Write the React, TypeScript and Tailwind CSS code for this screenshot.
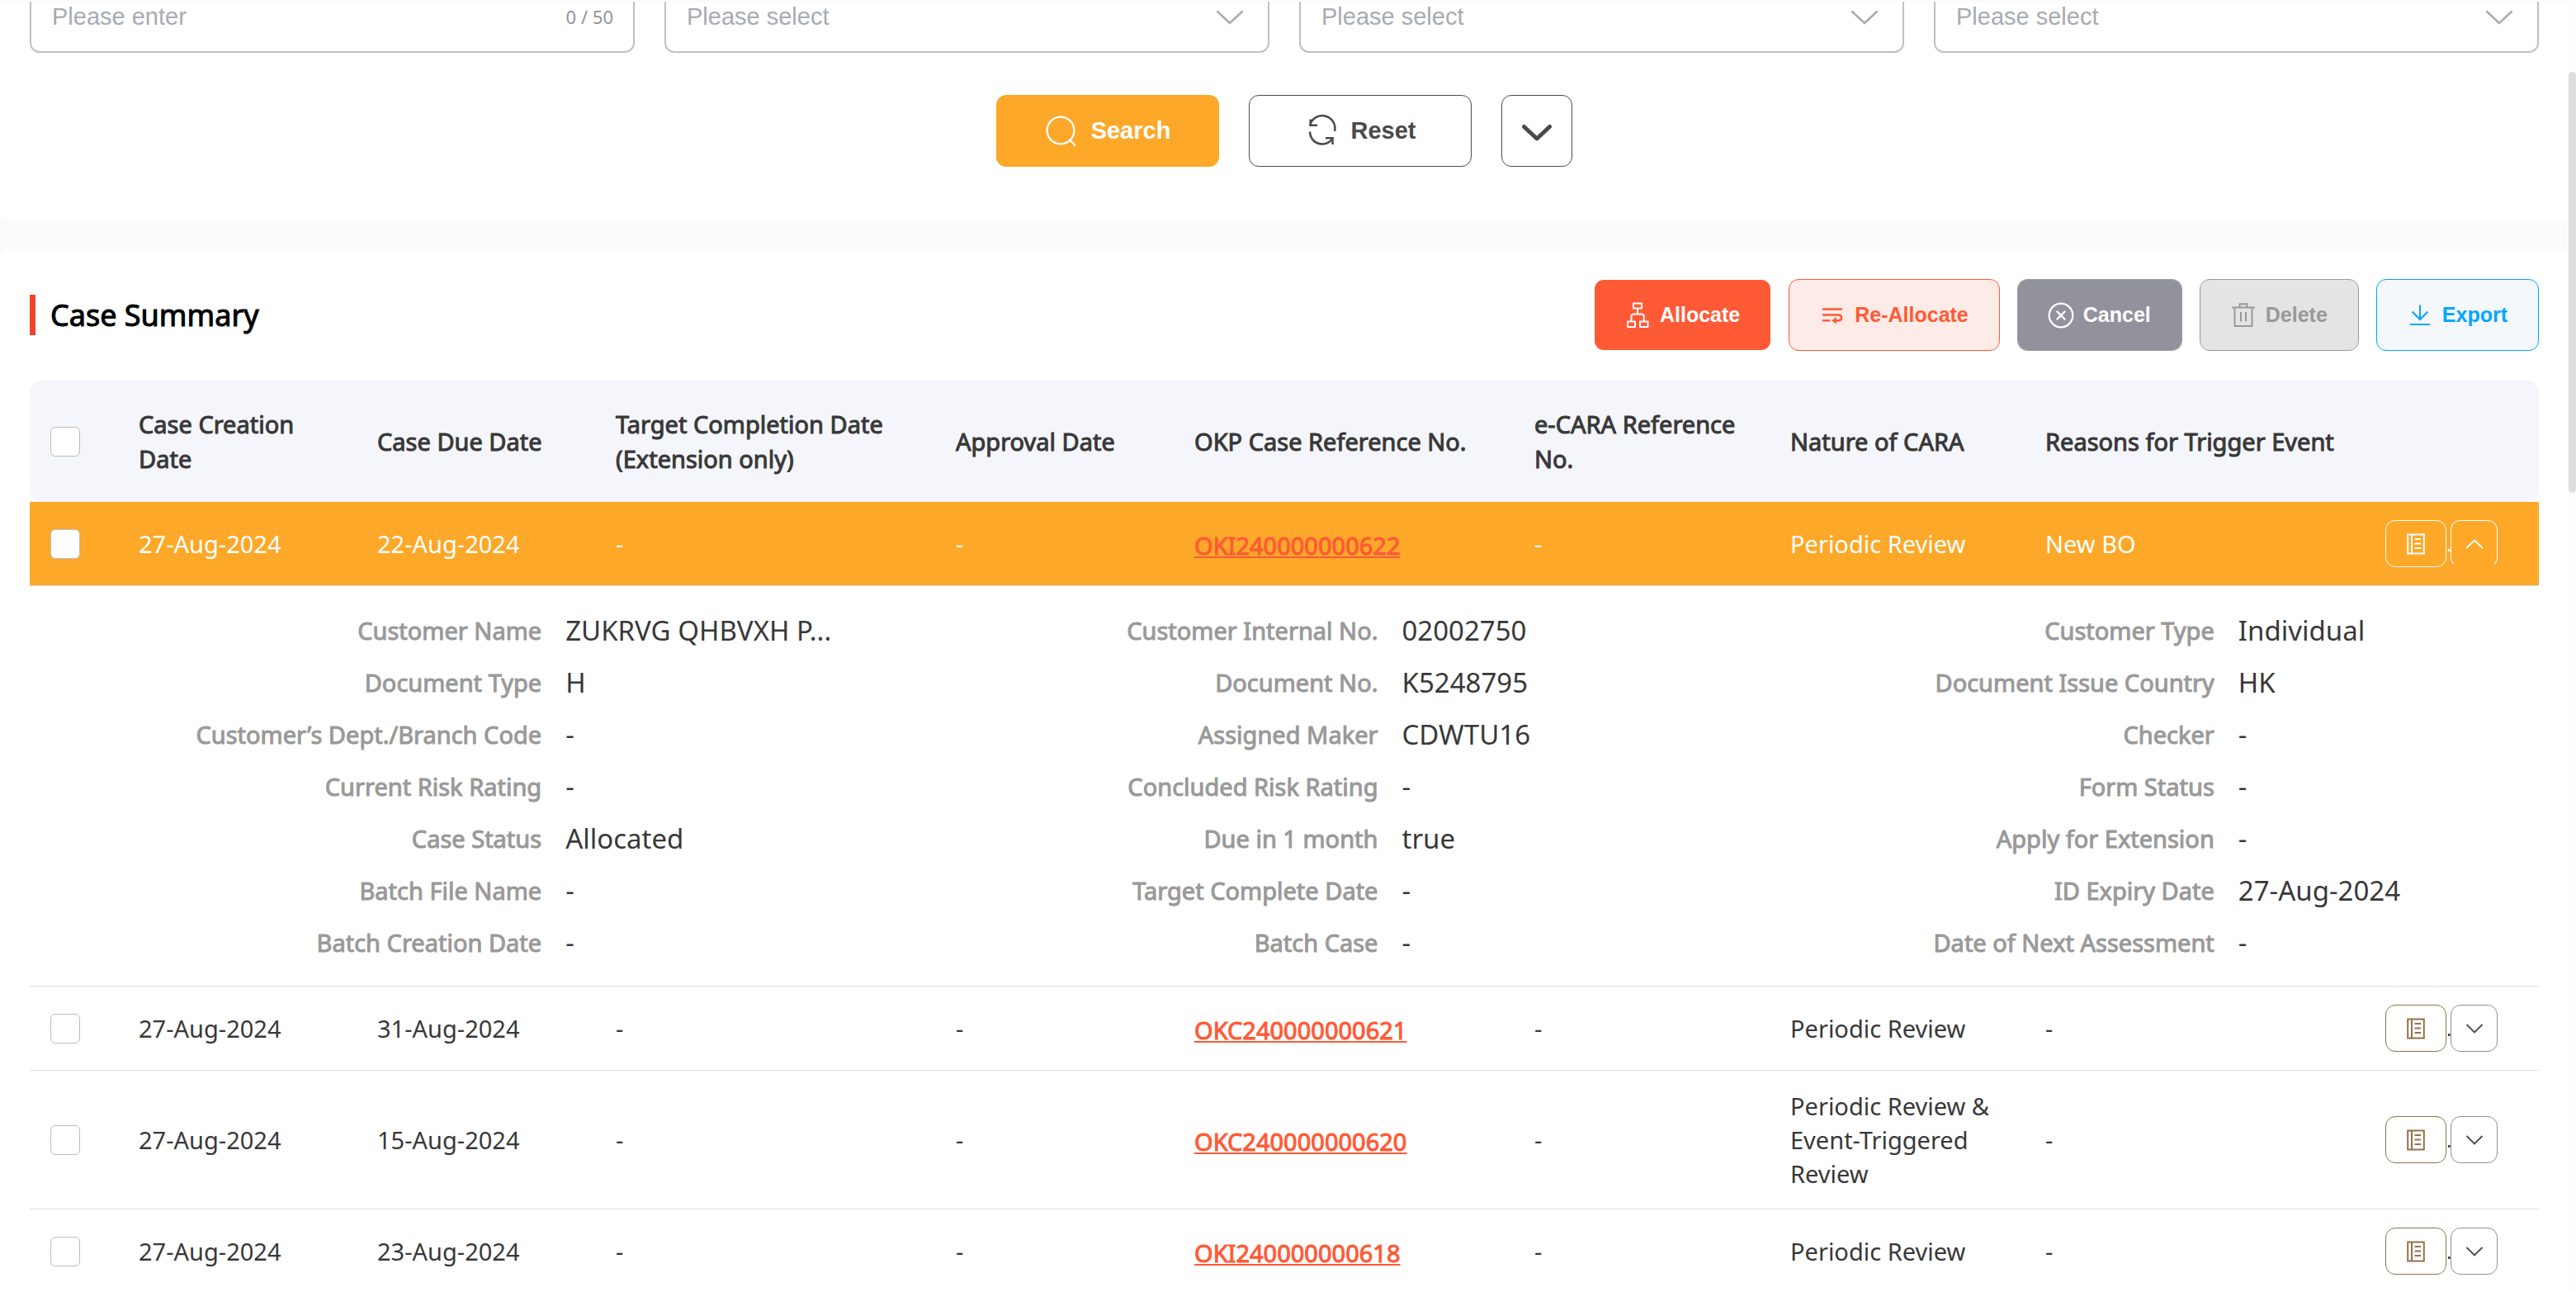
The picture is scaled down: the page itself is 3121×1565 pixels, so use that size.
import { Fragment, useState } from "react";
import type { ReactNode } from "react";

type CaseRow = {
  id: string;
  created: string;
  due: string;
  nature: string;
  reason: string;
};

const rows: CaseRow[] = [
  { id: "OKI240000000622", created: "27-Aug-2024", due: "22-Aug-2024", nature: "Periodic Review", reason: "New BO" },
  { id: "OKC240000000621", created: "27-Aug-2024", due: "31-Aug-2024", nature: "Periodic Review", reason: "-" },
  { id: "OKC240000000620", created: "27-Aug-2024", due: "15-Aug-2024", nature: "Periodic Review & Event-Triggered Review", reason: "-" },
  { id: "OKI240000000618", created: "27-Aug-2024", due: "23-Aug-2024", nature: "Periodic Review", reason: "-" },
];

const headers = [
  "Case Creation Date",
  "Case Due Date",
  "Target Completion Date (Extension only)",
  "Approval Date",
  "OKP Case Reference No.",
  "e-CARA Reference No.",
  "Nature of CARA",
  "Reasons for Trigger Event",
];

const details: [string, string][] = [
  ["Customer Name", "ZUKRVG QHBVXH P..."],
  ["Customer Internal No.", "02002750"],
  ["Customer Type", "Individual"],
  ["Document Type", "H"],
  ["Document No.", "K5248795"],
  ["Document Issue Country", "HK"],
  ["Customer’s Dept./Branch Code", "-"],
  ["Assigned Maker", "CDWTU16"],
  ["Checker", "-"],
  ["Current Risk Rating", "-"],
  ["Concluded Risk Rating", "-"],
  ["Form Status", "-"],
  ["Case Status", "Allocated"],
  ["Due in 1 month", "true"],
  ["Apply for Extension", "-"],
  ["Batch File Name", "-"],
  ["Target Complete Date", "-"],
  ["ID Expiry Date", "27-Aug-2024"],
  ["Batch Creation Date", "-"],
  ["Batch Case", "-"],
  ["Date of Next Assessment", "-"],
];

function SelectField({ label }: { label: string }) {
  return (
    <div className="relative h-[88px]">
      <select
        aria-label={label}
        defaultValue=""
        className="h-full w-full appearance-none rounded-xl border-2 border-[#c0c0c2] bg-white pr-16 pl-[25px] text-[29px] text-[#a8abb2] outline-none"
      >
        <option value="">Please select</option>
      </select>
      <svg className="pointer-events-none absolute top-9 right-[31px] h-[18px] w-[34px]" viewBox="0 0 34 18" fill="none" stroke="#a8abb2" strokeWidth="2.4" strokeLinecap="round">
        <path d="M2 2 L17 16 L32 2" />
      </svg>
    </div>
  );
}

function Check({ label }: { label: string }) {
  return (
    <input
      type="checkbox"
      aria-label={label}
      className="block size-9 appearance-none rounded-md border border-[#bdbdbd] bg-white checked:bg-[#fda829]"
    />
  );
}

function ActionButton({ tone, icon, children, disabled }: { tone: string; icon: ReactNode; children: ReactNode; disabled?: boolean }) {
  return (
    <button
      type="button"
      disabled={disabled}
      className={`flex h-[87px] items-center gap-3 rounded-xl border bg-clip-padding px-[37px] font-['Liberation_Sans',Arial,sans-serif] text-[25px] font-bold whitespace-nowrap ${tone}`}
    >
      <svg className="size-[30px] shrink-0 overflow-visible" viewBox="0 0 30 30" fill="none" stroke="currentColor" strokeWidth="2">
        {icon}
      </svg>
      {children}
    </button>
  );
}

function RowActions({ open, onToggle, id }: { open: boolean; onToggle: () => void; id: string }) {
  return (
    <div className="flex items-center">
      <button
        type="button"
        aria-label={`Open case ${id}`}
        className={`flex h-[57px] w-[74px] items-center justify-center rounded-xl border ${open ? "border-white text-white" : "border-[#93714c] text-[#93714c]"}`}
      >
        <svg className="h-[26px] w-[22px]" viewBox="0 0 22 26" fill="none" stroke="currentColor" strokeWidth="2">
          <path d="M1.2 1.5 H20.8 V24.5 H1.2 Z M6 1.5 V24.5 M9.5 7 H17 M9.5 12.5 H17 M9.5 18 H17" />
        </svg>
      </button>
      <span className="w-[5px] overflow-hidden text-2xl leading-8">.</span>
      <button
        type="button"
        aria-expanded={open}
        aria-label={`Details of case ${id}`}
        onClick={onToggle}
        className={`flex h-[57px] w-[57px] items-center justify-center rounded-xl border ${open ? "border-white border-b-transparent text-white" : "border-[#909093] text-[#4a4a4a]"}`}
      >
        <svg className="h-3 w-[22px]" viewBox="0 0 22 12" fill="none" stroke="currentColor" strokeWidth="1.8">
          <path d={open ? "M1 11 L11 1.5 L21 11" : "M1.5 1 L11 10.5 L20.5 1"} />
        </svg>
      </button>
    </div>
  );
}

function Details() {
  return (
    <dl className="grid grid-cols-3 pt-[22px] pb-[21px]">
      {details.map(([label, value]) => (
        <div key={label} className="flex h-[63px] items-center gap-[29px]">
          <dt className="w-[61.2%] text-right text-[#999999] [-webkit-text-stroke:1px_#999999]">{label}</dt>
          <dd className="text-[33px] whitespace-nowrap">{value}</dd>
        </div>
      ))}
    </dl>
  );
}

export default function App() {
  const [openId, setOpenId] = useState<string | null>("OKI240000000622");

  return (
    <div className="flex h-screen overflow-hidden bg-[#fbfbfb] font-['Noto_Sans',sans-serif] text-[29px] leading-[41px] text-[#383838]">
      <main className="min-w-0 flex-1 overflow-hidden pt-0.5">
        <section className="rounded-b-xl bg-white px-9 pb-16">
          <div className="flex h-[62px] items-end overflow-hidden">
            <div className="grid flex-1 grid-cols-4 gap-9 font-['Liberation_Sans',Arial,sans-serif]">
              <div className="flex h-[88px] items-center rounded-xl border-2 border-[#c0c0c2] bg-white pr-6 pl-[25px]">
                <input aria-label="Keyword" placeholder="Please enter" maxLength={50} className="min-w-0 flex-1 text-[29px] outline-none placeholder:text-[#a8abb2]" />
                <span className="font-['Noto_Sans',sans-serif] text-[22px] text-[#909399]">0 / 50</span>
              </div>
              <SelectField label="Second filter" />
              <SelectField label="Third filter" />
              <SelectField label="Fourth filter" />
            </div>
          </div>
          <div className="mt-[51px] flex justify-center gap-9 font-['Liberation_Sans',Arial,sans-serif] text-[29px] font-bold">
            <button type="button" className="flex h-[87px] w-[270px] items-center justify-center gap-5 rounded-xl bg-[#fda829] text-white">
              <svg className="size-9 overflow-visible" viewBox="0 0 36 36" fill="none" stroke="currentColor" strokeWidth="2.3">
                <circle cx="19" cy="17" r="16.4" />
                <path d="M30.5 29 L37 35.5" />
              </svg>
              Search
            </button>
            <button type="button" className="flex h-[87px] w-[270px] items-center justify-center gap-5 rounded-xl border border-[#4a4a4a] bg-white text-[#4a4a4a]">
              <svg className="size-9 overflow-visible" viewBox="0 0 36 36" fill="none" stroke="currentColor" strokeWidth="2.5">
                <path d="M6 11 A15 15 0 0 1 36 18 M6.7 3.5 V10.7 H15 M6 18.5 A15 15 0 0 0 34 26 M25 26.2 H33.5 V34" />
              </svg>
              Reset
            </button>
            <button type="button" aria-label="More filters" className="flex h-[87px] w-[86px] items-center justify-center rounded-xl border border-[#4a4a4a] bg-white text-[#4a4a4a]">
              <svg className="mt-1 h-[22px] w-[38px]" viewBox="0 0 38 22" fill="none" stroke="currentColor" strokeWidth="5" strokeLinecap="round" strokeLinejoin="round">
                <path d="M3.5 3.5 L19 18 L34.5 3.5" />
              </svg>
            </button>
          </div>
        </section>

        <section className="mt-9 rounded-t-xl bg-white px-9 pt-9 pb-9">
          <div className="flex items-center justify-between">
            <div className="flex items-center gap-[18px]">
              <span className="h-[49px] w-[7px] bg-[#ee442b]" />
              <h2 className="text-4xl leading-[49px] font-normal text-black [-webkit-text-stroke:1px_#000000]">Case Summary</h2>
            </div>
            <div className="flex gap-[21px]">
              <ActionButton
                tone="border-transparent bg-[#ff5a36] text-white"
                icon={<path strokeLinejoin="round" d="M10 0.5 H20 V6.5 H10 Z M3 22.5 H12 V29 H3 Z M18 22.5 H27.5 V29 H18 Z M15 6.5 V13.5 M7.5 22.5 V16 Q7.5 13.5 10 13.5 H20 Q22.7 13.5 22.7 16 V22.5" />}
              >
                Allocate
              </ActionButton>
              <ActionButton
                tone="border-[#ff5a36] bg-[#fcebe7] text-[#ff5a36]"
                icon={
                  <>
                    <path strokeWidth="2.6" strokeLinecap="round" d="M4 7.5 H26 M4 14.5 H22.5 Q26 14.5 26 18 Q26 21.3 22.5 21.3 H17 M4 21.3 H11" />
                    <path fill="currentColor" stroke="none" d="M14 21.3 L20 17 V25.6 Z" />
                  </>
                }
              >
                Re-Allocate
              </ActionButton>
              <ActionButton
                tone="border-[#9a9a9a] bg-[#92929c] text-white"
                icon={
                  <>
                    <circle cx="15" cy="15" r="14.3" strokeWidth="2.2" />
                    <path strokeWidth="2.4" strokeLinecap="round" d="M10.5 10.5 L19.5 19.5 M19.5 10.5 L10.5 19.5" />
                  </>
                }
              >
                Cancel
              </ActionButton>
              <ActionButton
                disabled
                tone="border-[#999999] bg-[#e4e4e4] text-[#999999]"
                icon={<path d="M1 5.5 H29 M10.5 5.5 V1.2 H19.5 V5.5 M4.5 5.5 V28 H25.5 V5.5 M12 11 V22.5 M18 11 V22.5" />}
              >
                Delete
              </ActionButton>
              <ActionButton tone="border-[#00a6ff] bg-[#f4f7fc] text-[#00a6ff]" icon={<path d="M15 2.5 V20 M5.5 10.5 L15 20 L24.5 10.5 M3 26 H27" />}>
                Export
              </ActionButton>
            </div>
          </div>

          <table className="mt-9 w-full table-fixed border-separate border-spacing-0 text-left">
            <colgroup>
              <col className="w-[108px]" />
              <col className="w-[289px]" />
              <col className="w-[289px]" />
              <col className="w-[412px]" />
              <col className="w-[289px]" />
              <col className="w-[412px]" />
              <col className="w-[310px]" />
              <col className="w-[309px]" />
              <col className="w-[412px]" />
              <col className="w-[210px]" />
            </colgroup>
            <thead>
              <tr className="h-[147px] leading-[42px]">
                <th className="rounded-l-[14px] bg-[#f5f6fb] pl-[25px]">
                  <Check label="Select all cases" />
                </th>
                {headers.map((h) => (
                  <th key={h} className="bg-[#f5f6fb] px-6 font-normal [-webkit-text-stroke:1px_#383838]">{h}</th>
                ))}
                <th className="rounded-r-[14px] bg-[#f5f6fb]" aria-label="Actions" />
              </tr>
            </thead>
            <tbody>
              {rows.map((row) => {
                const open = row.id === openId;
                return (
                  <Fragment key={row.id}>
                    <tr className={open ? "bg-[#fda829] text-white" : ""}>
                      <td className="border-b border-[#dcdfe6] py-[22px] pl-[25px]">
                        <Check label={`Select ${row.id}`} />
                      </td>
                      {[row.created, row.due, "-", "-"].map((v, i) => (
                        <td key={i} className="border-b border-[#dcdfe6] px-6 py-[22px]">{v}</td>
                      ))}
                      <td className="border-b border-[#dcdfe6] px-6">
                        <a href={`#${row.id}`} className="block pt-1 text-[#ff5a36] underline [-webkit-text-stroke:1px_#ff5a36]">{row.id}</a>
                      </td>
                      {["-", row.nature, row.reason].map((v, i) => (
                        <td key={i} className="border-b border-[#dcdfe6] px-6 py-[22px]">{v}</td>
                      ))}
                      <td className="border-b border-[#dcdfe6] py-[22px] pl-6">
                        <RowActions open={open} id={row.id} onToggle={() => setOpenId(open ? null : row.id)} />
                      </td>
                    </tr>
                    {open && (
                      <tr>
                        <td colSpan={10} className="border-b border-[#dcdfe6]">
                          <Details />
                        </td>
                      </tr>
                    )}
                  </Fragment>
                );
              })}
            </tbody>
          </table>
        </section>
      </main>
      <div className="w-[9px] bg-[#fcfcfc] pt-[87px]">
        <div className="h-[510px] rounded-full bg-[#dfdedc]" />
      </div>
    </div>
  );
}
